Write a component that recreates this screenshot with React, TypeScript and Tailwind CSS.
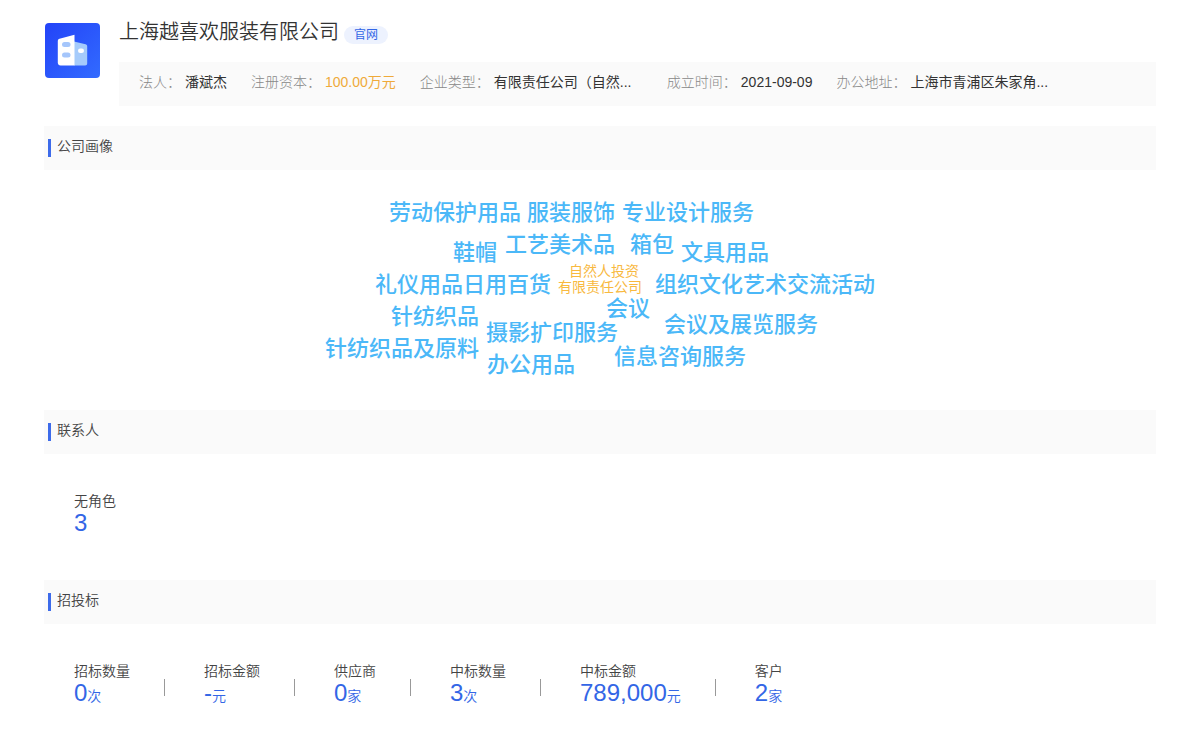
import type { ReactNode } from 'react';

type Info = { label: string; value: string; highlight?: boolean; wide?: boolean };
type Stat = { label: string; value: string; unit?: string };
type Word = { text: string; x: number; y: number };

const infos: Info[] = [
  { label: '法人：', value: '潘斌杰' },
  { label: '注册资本：', value: '100.00万元', highlight: true },
  { label: '企业类型：', value: '有限责任公司（自然...', wide: true },
  { label: '成立时间：', value: '2021-09-09' },
  { label: '办公地址：', value: '上海市青浦区朱家角...', wide: true },
];

const contacts: Stat[] = [{ label: '无角色', value: '3' }];

const bids: Stat[] = [
  { label: '招标数量', value: '0', unit: '次' },
  { label: '招标金额', value: '-', unit: '元' },
  { label: '供应商', value: '0', unit: '家' },
  { label: '中标数量', value: '3', unit: '次' },
  { label: '中标金额', value: '789,000', unit: '元' },
  { label: '客户', value: '2', unit: '家' },
];

// word positions on the 600 x 200 cloud canvas
const words: Word[] = [
  { text: '劳动保护用品', x: 89, y: 8 },
  { text: '服装服饰', x: 227, y: 8 },
  { text: '专业设计服务', x: 322, y: 8 },
  { text: '工艺美术品', x: 205, y: 40 },
  { text: '箱包', x: 330, y: 40 },
  { text: '鞋帽', x: 153, y: 48 },
  { text: '文具用品', x: 381, y: 48 },
  { text: '礼仪用品', x: 75, y: 80 },
  { text: '日用百货', x: 163, y: 80 },
  { text: '组织文化艺术交流活动', x: 355, y: 80 },
  { text: '会议', x: 306, y: 104 },
  { text: '针纺织品', x: 91, y: 112 },
  { text: '会议及展览服务', x: 364, y: 120 },
  { text: '摄影扩印服务', x: 186, y: 128 },
  { text: '针纺织品及原料', x: 25, y: 144 },
  { text: '信息咨询服务', x: 314, y: 152 },
  { text: '办公用品', x: 187, y: 160 },
];

const tags: Word[] = [
  { text: '自然人投资', x: 269, y: 72 },
  { text: '有限责任公司', x: 258, y: 88 },
];

function CompanyLogo() {
  return (
    <svg viewBox="0 0 55 55" className="mt-px size-[55px] shrink-0" aria-hidden="true">
      <defs>
        <linearGradient id="logo-bg" x1="0" y1="0" x2="1" y2="1">
          <stop offset="0" stopColor="#2343f8" />
          <stop offset="1" stopColor="#326bff" />
        </linearGradient>
      </defs>
      <rect width="55" height="55" rx="4" fill="url(#logo-bg)" />
      <path d="M29 18.5l11.500 2.700c1 .2 1.700 1 1.700 2V40.500c0 1.200-.8 2-2 2H29z" fill="#a5cbfb" />
      <path d="M14.500 15.800L29.500 11.800v30.700h-14c-1.500 0-2.700-1.200-2.700-2.700V18.200c0-1.200.7-2.100 1.700-2.400z" fill="#fff" />
      <rect x="17" y="19" width="8.500" height="5" rx="2.500" fill="#a5c6fb" />
      <rect x="17" y="29.500" width="8.500" height="5" rx="2.500" fill="#a5c6fb" />
      <rect x="33" y="25.500" width="6" height="4.500" rx="2.200" fill="#fff" />
    </svg>
  );
}

function Section({ title, children }: { title: string; children: ReactNode }) {
  return (
    <section>
      <div className="flex h-11 items-start bg-[#fafafa] px-1">
        <span className="mt-[13px] h-[18px] w-[3px] bg-[#3d6bea]" />
        <h2 className="mt-2.5 ml-1.5 text-sm font-[350] text-[#444]">{title}</h2>
      </div>
      {children}
    </section>
  );
}

function StatList({ stats }: { stats: Stat[] }) {
  return (
    <dl className="flex flex-wrap px-[30px] pt-9">
      {stats.map((stat, i) => (
        <div key={stat.label} className="flex">
          {i > 0 && <span className="mt-[19px] mr-[39px] ml-[34px] h-[17px] w-px bg-[#999]" />}
          <div>
            <dt className="text-sm leading-[22px] font-[350] text-[#444]">{stat.label}</dt>
            <dd className="-mt-px text-2xl leading-6 font-[350] text-[#3366e6]">
              {stat.value}
              {stat.unit && <span className="text-sm leading-6">{stat.unit}</span>}
            </dd>
          </div>
        </div>
      ))}
    </dl>
  );
}

function WordCloud() {
  return (
    <div className="relative mx-auto h-[200px] w-[600px]">
      {words.map((word) => (
        <span
          key={word.text}
          className="absolute text-[22px] leading-8 font-medium whitespace-nowrap text-[#4bb8f8]"
          style={{ left: word.x, top: word.y }}
        >
          {word.text}
        </span>
      ))}
      {tags.map((tag) => (
        <span
          key={tag.text}
          className="absolute text-sm leading-5 whitespace-nowrap text-[#f8b93f]"
          style={{ left: tag.x, top: tag.y }}
        >
          {tag.text}
        </span>
      ))}
    </div>
  );
}

export default function App() {
  return (
    <main lang="zh-CN" className="bg-white px-11 pt-[22px] pb-10 font-['Liberation_Sans','Noto_Sans_CJK_SC',sans-serif]">
      <header className="flex gap-5 pl-px">
        <CompanyLogo />
        <div className="-ml-px min-w-0 flex-1">
          <div className="-mt-1 flex items-start gap-[5px]">
            <h1 className="text-xl leading-7 font-[350] text-[#333]">上海越喜欢服装有限公司</h1>
            <a href="#" className="mt-2 rounded-full bg-[#edf2fe] px-2.5 text-xs leading-[18px] text-[#3366e6]">
              官网
            </a>
          </div>
          <div className="mt-4 flex min-h-11 flex-wrap items-center gap-x-6 bg-[#fafafa] px-5 pb-1">
            {infos.map((info) => (
              <div key={info.label} className="flex gap-1 text-sm whitespace-nowrap">
                <span className="font-light text-[#888]">{info.label}</span>
                <span className={info.highlight ? 'text-[#efaa3a]' : info.wide ? 'w-[149px] text-[#333]' : 'text-[#333]'}>
                  {info.value}
                </span>
              </div>
            ))}
          </div>
        </div>
      </header>

      <div className="mt-5">
        <Section title="公司画像">
          <div className="pt-[19px] pb-[21px]">
            <WordCloud />
          </div>
        </Section>
        <Section title="联系人">
          <div className="h-[126px]">
            <StatList stats={contacts} />
          </div>
        </Section>
        <Section title="招投标">
          <StatList stats={bids} />
        </Section>
      </div>
    </main>
  );
}
